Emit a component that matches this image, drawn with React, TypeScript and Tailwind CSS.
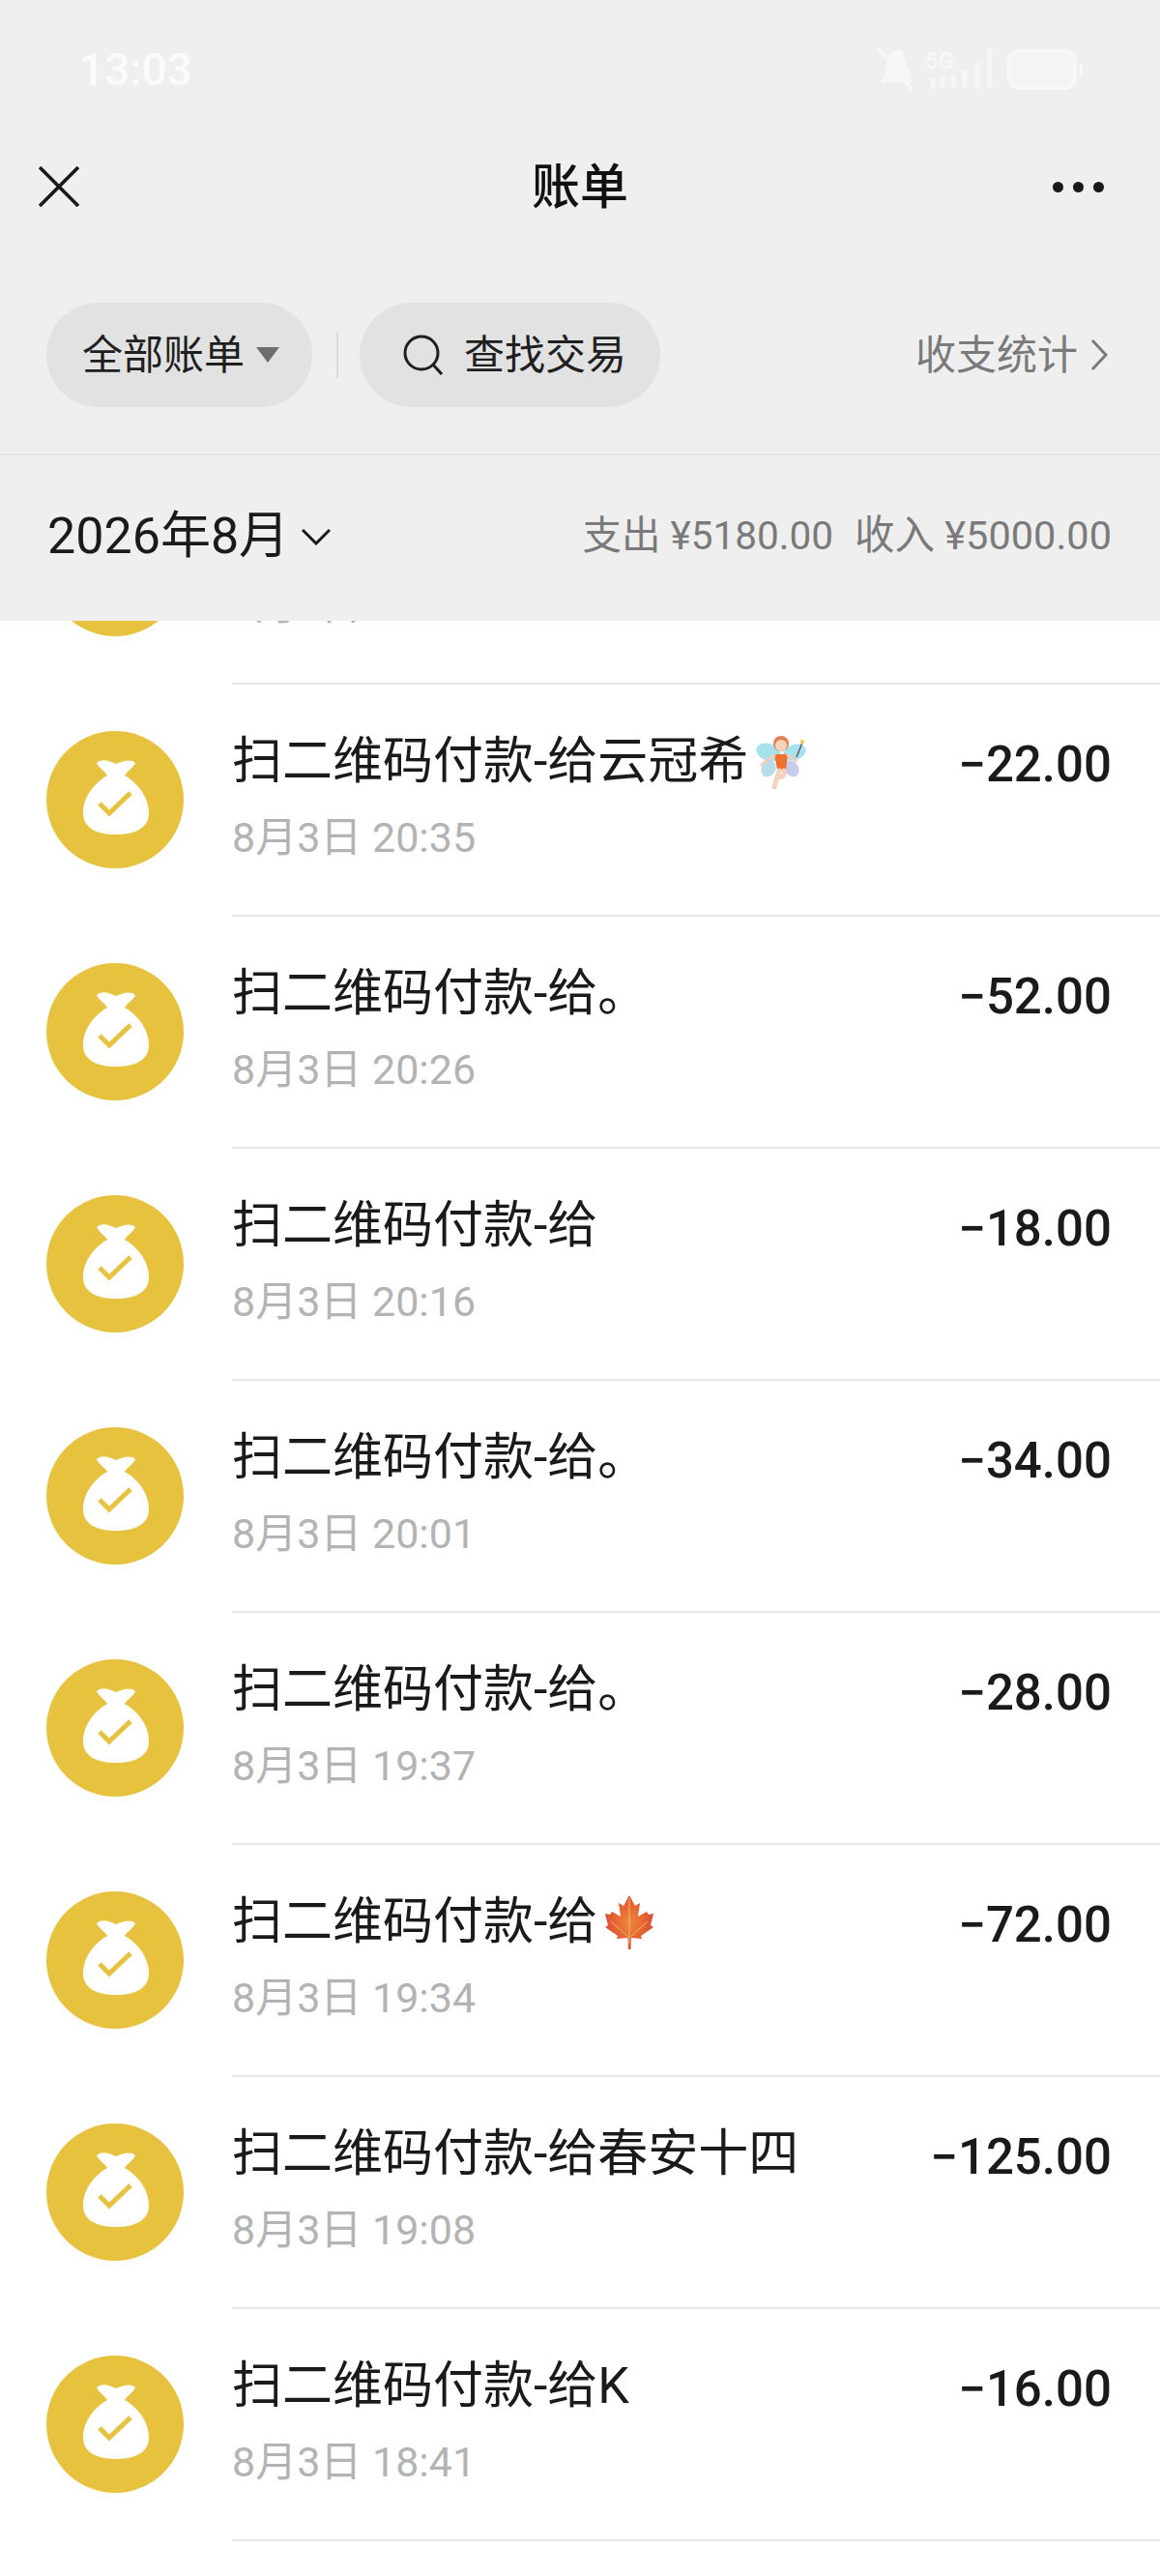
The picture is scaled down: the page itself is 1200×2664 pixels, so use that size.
import { ReactNode } from "react"

function BagIcon() {
    return (
        <svg viewBox="0 0 142 142" className="w-[142px] h-[142px] shrink-0 mb-[3px]">
            <circle cx="71" cy="71" r="71" fill="#e7c23f" />
            <path
                d="M52 33C58 28 65 31 72 34C78 32 86 28 92 33C90 38 84 41 81 46C92 52 106 66 106 85C106 100 92 107 72 107C52 107 38 100 38 85C38 66 52 52 63 46C60 41 54 38 52 33Z"
                fill="#fff"
            />
            <path d="M55 75L65 85L87 64" fill="none" stroke="#e7c23f" strokeWidth="5" />
        </svg>
    )
}

function Fairy() {
    return (
        <svg viewBox="0 0 52 56" className="w-[52px] h-[56px] ml-[8px] shrink-0">
            <ellipse cx="13" cy="18" rx="13" ry="9" fill="#a5e2ec" transform="rotate(20 13 18)" />
            <ellipse cx="40" cy="18" rx="12" ry="8" fill="#a5e2ec" transform="rotate(-20 40 18)" />
            <ellipse cx="13" cy="35" rx="7" ry="9" fill="#b5dcea" transform="rotate(35 13 35)" />
            <ellipse cx="37" cy="35" rx="7" ry="9" fill="#c5cdea" transform="rotate(-35 37 35)" />
            <path d="M42 23L48 8" stroke="#5b5560" strokeWidth="1.4" />
            <circle cx="48" cy="7" r="2.2" fill="#f2d25a" />
            <circle cx="26" cy="9" r="8" fill="#e0814f" />
            <circle cx="26" cy="11" r="6" fill="#f6d3bd" />
            <path d="M19 20H33L31 36C28 38 24 38 22 36Z" fill="#f0702f" />
            <path d="M19 21L6 31M33 21L41 27" stroke="#f3cdb5" strokeWidth="3" strokeLinecap="round" />
            <path d="M24 37L19 54M29 37C30 42 27 44 24 44" stroke="#f3d3bd" strokeWidth="5" fill="none" strokeLinecap="round" />
        </svg>
    )
}

function Maple() {
    return (
        <svg viewBox="0 0 50 56" className="w-[50px] h-[56px] ml-[8px] shrink-0">
            <defs>
                <radialGradient id="leaf" cx="0.5" cy="0.5" r="0.6">
                    <stop offset="0" stopColor="#f08a3a" />
                    <stop offset="1" stopColor="#d9412e" />
                </radialGradient>
            </defs>
            <path
                d="M25 0L31 11L36 8L34 22L43 17L45 20L50 19L47 31L50 33L37 42L38 45L27 44L26.500 56H24L23.500 44L12 45L13 42L0 33L3 31L0 19L5 20L7 17L16 22L14 8L19 11Z"
                fill="url(#leaf)"
            />
            <path d="M25 3V50M25 44L6 27M25 44L44 27" stroke="#f7b070" strokeWidth="1" fill="none" />
        </svg>
    )
}

function Row({ title, time, amount, extra }: { title: string; time: string; amount: string; extra?: ReactNode }) {
    return (
        <div className="flex items-center pl-[48px] h-[240px]">
            <BagIcon />
            <div className="ml-[50px] flex-1 h-full border-b-2 border-[#e8e8e8] pr-[50px] pt-[48px]">
                <div className="flex justify-between items-center h-[64px]">
                    <div className="flex items-center text-[52px] leading-[64px] text-[#1a1a1a]">
                        {title}
                        {extra}
                    </div>
                    <div className="text-[51px] font-medium text-[#1a1a1a] mt-[6px]">{amount}</div>
                </div>
                <div className="text-[43px] leading-[50px] mt-[21px] text-[#b3b3b3]">{time}</div>
            </div>
        </div>
    )
}

export default function App() {
    return (
        <div
            className="w-[1200px] h-[2664px] overflow-hidden bg-white"
            style={{ fontFamily: '"Roboto", "Noto Sans CJK SC", sans-serif' }}
        >
            <header className="relative z-10 h-[642px] bg-[#efefef]">
                <div className="h-[471px] border-b-2 border-[#e6e6e6]">
                    {/* status bar */}
                    <div className="flex items-center justify-between h-[144px] pl-[82px] pr-[78px]">
                        <span className="text-[46px] font-medium text-[#fbfbfb]">13:03</span>
                        <svg viewBox="0 0 215 50" className="w-[215px] h-[50px]">
                            <path d="M4 38C10 32 8 20 13 11C16 5 22 3 26 5L36 34L38 38Z" fill="#f7f7f7" />
                            <path d="M1 2L36 46" stroke="#f7f7f7" strokeWidth="3" />
                            <text x="50" y="24" fontSize="24" fontWeight="700" fill="#f7f7f7">5G</text>
                            <path d="M58 34V44M68 32V44M79 30V44M91 26V44M104 18V44M117 2V44" stroke="#f7f7f7" strokeWidth="5" />
                            <rect x="137" y="6" width="68" height="38" rx="11" fill="#f4f4f4" stroke="#f8f8f8" strokeWidth="4" />
                            <rect x="210" y="19" width="3" height="12" rx="1.500" fill="#f8f8f8" />
                        </svg>
                    </div>

                    {/* title bar */}
                    <div className="flex items-center h-[98px] px-[40px]">
                        <div className="flex-1">
                            <svg viewBox="0 0 40 40" className="w-[42px] h-[42px]" fill="none" stroke="#1a1a1a" strokeWidth="3.500">
                                <path d="M1 1L39 39M39 1L1 39" />
                            </svg>
                        </div>
                        <span className="text-[50px] font-medium text-[#111] mt-[2px]">账单</span>
                        <div className="flex-1 flex justify-end">
                            <div className="flex gap-[10px] mr-[18px]">
                                <span className="w-[11px] h-[11px] rounded-full bg-[#1a1a1a]" />
                                <span className="w-[11px] h-[11px] rounded-full bg-[#1a1a1a]" />
                                <span className="w-[11px] h-[11px] rounded-full bg-[#1a1a1a]" />
                            </div>
                        </div>
                    </div>

                    {/* filters */}
                    <div className="flex items-center pl-[48px] pr-[54px] mt-[71px]">
                        <div className="flex items-center w-[275px] h-[108px] pl-[37px] rounded-full bg-[#e2e2e2] text-[42px] text-[#1f1f1f]">
                            全部账单
                            <svg viewBox="0 0 24 16" className="w-[24px] h-[16px] ml-[12px]">
                                <path d="M0 0H24L12 16Z" fill="#6e6e6e" />
                            </svg>
                        </div>
                        <span className="w-[2px] h-[48px] bg-[#dcdcdc] ml-[25px] mr-[22px]" />
                        <div className="flex items-center w-[311px] h-[108px] pl-[45px] rounded-full bg-[#e2e2e2] text-[42px] text-[#1f1f1f]">
                            <svg viewBox="0 0 42 42" className="w-[42px] h-[42px] mr-[21px]" fill="none" stroke="#1f1f1f" strokeWidth="3">
                                <circle cx="19" cy="19" r="17" />
                                <path d="M31 31L40 41" />
                            </svg>
                            查找交易
                        </div>
                        <div className="ml-auto flex items-center text-[42px] text-[#7a7a7a]">
                            收支统计
                            <svg viewBox="0 0 18 34" className="w-[18px] h-[34px] ml-[13px]" fill="none" stroke="#7a7a7a" strokeWidth="3">
                                <path d="M2 2L16 17L2 32" />
                            </svg>
                        </div>
                    </div>
                </div>

                {/* month summary */}
                <div className="flex items-center justify-between h-[167px] pl-[49px] pr-[50px]">
                    <div className="flex items-center text-[52px] text-[#1a1a1a]">
                        2026年8月
                        <svg viewBox="0 0 30 18" className="w-[30px] h-[18px] ml-[13px]" fill="none" stroke="#1a1a1a" strokeWidth="3">
                            <path d="M1 2L15 16L29 2" />
                        </svg>
                    </div>
                    <div className="flex items-center gap-[22px] text-[#7a7a7a]">
                        <span className="text-[40.500px]">支出 ¥5180.00</span>
                        <span className="text-[41.500px]">收入 ¥5000.00</span>
                    </div>
                </div>
            </header>

            {/* list scrolled under the header */}
            <div className="-mt-[174px]">
                <Row title="" time="8月3日 20:44" amount="" />
                <Row title="扫二维码付款-给云冠希" time="8月3日 20:35" amount="−22.00" extra={<Fairy />} />
                <Row title="扫二维码付款-给。" time="8月3日 20:26" amount="−52.00" />
                <Row title="扫二维码付款-给" time="8月3日 20:16" amount="−18.00" />
                <Row title="扫二维码付款-给。" time="8月3日 20:01" amount="−34.00" />
                <Row title="扫二维码付款-给。" time="8月3日 19:37" amount="−28.00" />
                <Row title="扫二维码付款-给" time="8月3日 19:34" amount="−72.00" extra={<Maple />} />
                <Row title="扫二维码付款-给春安十四" time="8月3日 19:08" amount="−125.00" />
                <Row title="扫二维码付款-给K" time="8月3日 18:41" amount="−16.00" />
            </div>
        </div>
    )
}
